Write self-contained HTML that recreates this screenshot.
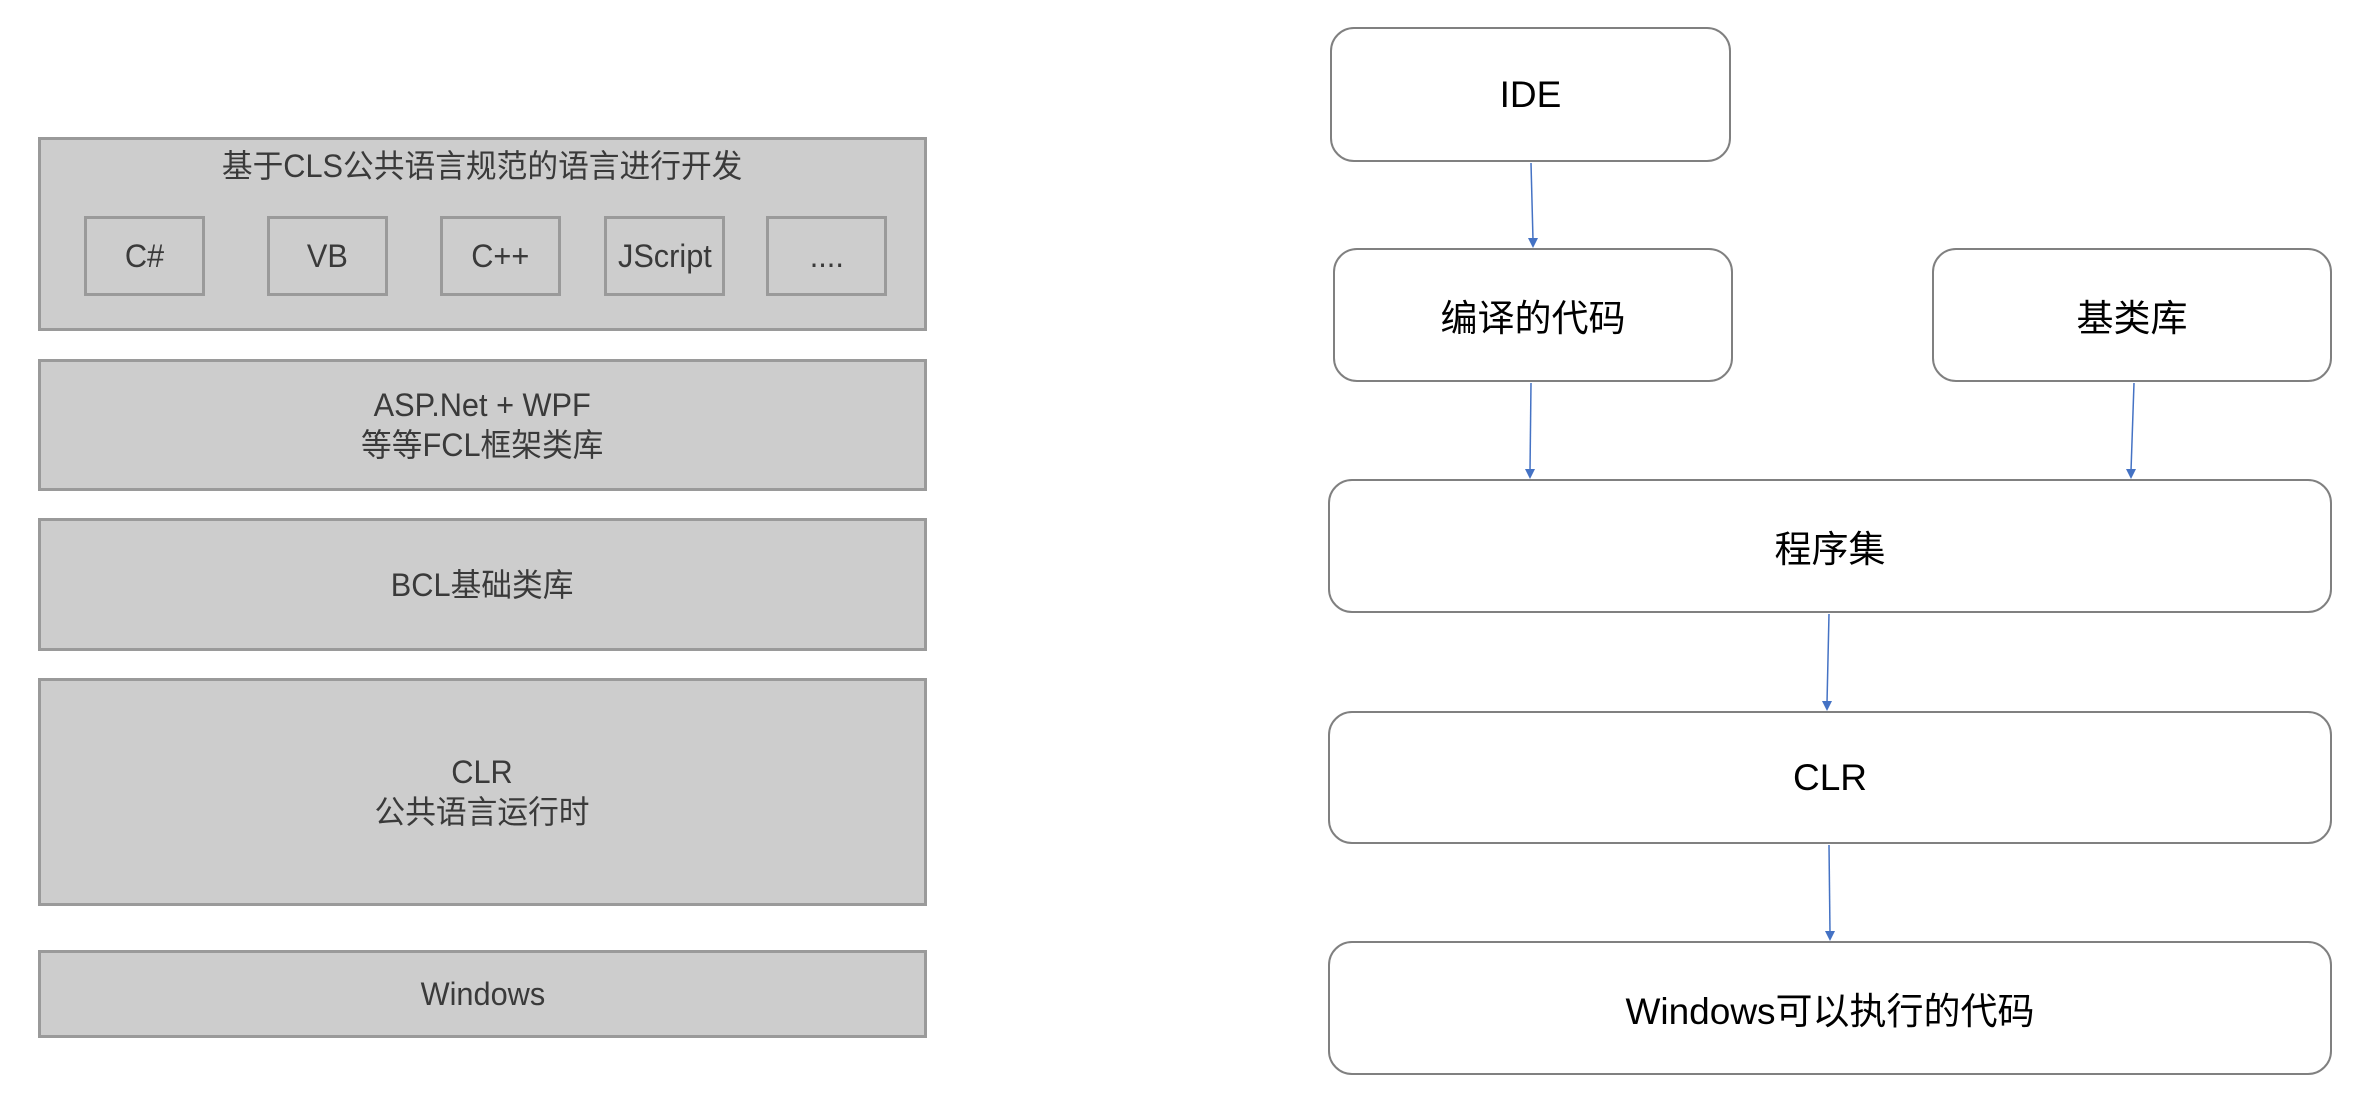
<!DOCTYPE html>
<html><head><meta charset="utf-8"><style>
body{margin:0;width:2356px;height:1106px;background:#fff;position:relative;overflow:hidden;font-family:"Liberation Sans","Noto Sans CJK SC",sans-serif}
.g{position:absolute;background:#cdcdcd;border:3px solid #9a9a9a;box-sizing:border-box;color:#3a3a3a;font-size:32px;text-align:center;display:flex;align-items:center;justify-content:center;line-height:40px}
.g span{display:inline-block;transform:scaleX(0.96)}
.r{position:absolute;background:#fff;border:2px solid #808080;border-radius:24px;box-sizing:border-box;display:flex;align-items:center;justify-content:center;font-size:37px;color:#000}
</style></head><body>
<div class="g" style="left:38px;top:137px;width:889px;height:194px;align-items:flex-start;padding-top:6px"><span>基于CLS公共语言规范的语言进行开发</span></div>
<div class="g" style="left:84px;top:216px;width:121px;height:80px"><span>C#</span></div>
<div class="g" style="left:267px;top:216px;width:121px;height:80px"><span>VB</span></div>
<div class="g" style="left:440px;top:216px;width:121px;height:80px"><span>C++</span></div>
<div class="g" style="left:604px;top:216px;width:121px;height:80px"><span>JScript</span></div>
<div class="g" style="left:766px;top:216px;width:121px;height:80px"><span>....</span></div>
<div class="g" style="left:38px;top:359px;width:889px;height:132px"><span>ASP.Net + WPF<br>等等FCL框架类库</span></div>
<div class="g" style="left:38px;top:518px;width:889px;height:133px"><span>BCL基础类库</span></div>
<div class="g" style="left:38px;top:678px;width:889px;height:228px"><span>CLR<br>公共语言运行时</span></div>
<div class="g" style="left:38px;top:950px;width:889px;height:88px"><span>Windows</span></div>

<div class="r" style="left:1330px;top:27px;width:401px;height:135px">IDE</div>
<div class="r" style="left:1333px;top:248px;width:400px;height:134px">编译的代码</div>
<div class="r" style="left:1932px;top:248px;width:400px;height:134px">基类库</div>
<div class="r" style="left:1328px;top:479px;width:1004px;height:134px">程序集</div>
<div class="r" style="left:1328px;top:711px;width:1004px;height:133px">CLR</div>
<div class="r" style="left:1328px;top:941px;width:1004px;height:134px">Windows可以执行的代码</div>

<svg width="2356" height="1106" style="position:absolute;left:0;top:0" fill="#4472c4" stroke="#4472c4" stroke-width="1.5">
<line x1="1531" y1="163" x2="1533" y2="240"/><polygon points="1528,238 1538,238 1533,248" stroke="none"/>
<line x1="1531" y1="383" x2="1530" y2="471"/><polygon points="1525,469 1535,469 1530,479" stroke="none"/>
<line x1="2134" y1="383" x2="2131" y2="471"/><polygon points="2126,469 2136,469 2131,479" stroke="none"/>
<line x1="1829" y1="614" x2="1827" y2="703"/><polygon points="1822,701 1832,701 1827,711" stroke="none"/>
<line x1="1829" y1="845" x2="1830" y2="933"/><polygon points="1825,931 1835,931 1830,941" stroke="none"/>
</svg>
</body></html>
